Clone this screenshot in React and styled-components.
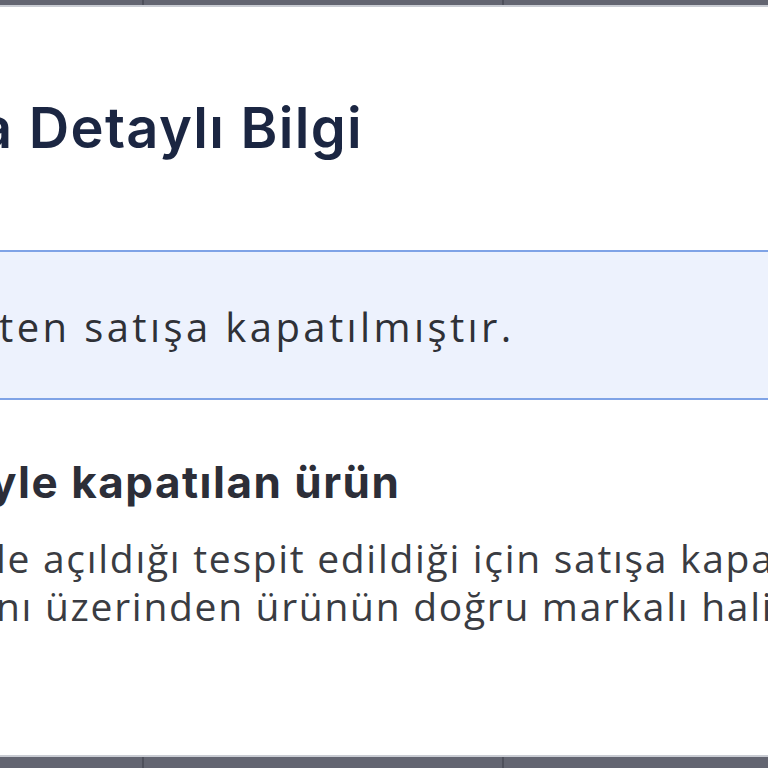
import React from "react";
import styled, { createGlobalStyle } from "styled-components";

const GlobalStyle = createGlobalStyle`
  html, body {
    margin: 0;
    padding: 0;
    background: #ffffff;
  }
  body {
    font-family: "Open Sans", "Noto Sans", Arial, sans-serif;
  }
`;

const Page = styled.div`
  width: 768px;
  height: 768px;
  display: flex;
  flex-direction: column;
  overflow: hidden;
  background: #ffffff;
`;

const Bar = styled.div`
  flex: 0 0 auto;
  height: ${(props) => props.$height}px;
  background: #636571;
  display: grid;
  grid-template-columns: 142px 2px 358px 2px 1fr;
  border-${(props) => (props.$top ? "bottom" : "top")}: 2px solid #c9ccd3;
`;

const BarDivider = styled.div`
  grid-column: ${(props) => props.$col};
  background: #4e505b;
`;

const Modal = styled.div`
  flex: 1 1 auto;
  display: flex;
  flex-direction: column;
  overflow: hidden;
`;

const Title = styled.h2`
  margin: 93px 0 0 -20px;
  font-family: Inter, "Open Sans", sans-serif;
  font-weight: 600;
  font-size: 56px;
  line-height: 56px;
  letter-spacing: 1.3px;
  color: #1b2642;
  white-space: nowrap;
`;

const Alert = styled.div`
  margin-top: 94px;
  height: 150px;
  box-sizing: border-box;
  padding-top: 4px;
  background: #edf2fd;
  border-top: 2px solid #7fa3e6;
  border-bottom: 2px solid #7fa3e6;
  display: flex;
  align-items: center;
`;

const AlertText = styled.p`
  margin: 0 0 0 -1px;
  font-family: "Open Sans", "Noto Sans", sans-serif;
  font-weight: 400;
  font-size: 40px;
  line-height: 40px;
  letter-spacing: 3.4px;
  color: #2f3137;
  white-space: nowrap;
`;

const Section = styled.div`
  padding-top: 60px;
  display: flex;
  flex-direction: column;
  gap: 30px;
`;

const SectionTitle = styled.h3`
  margin: 0 0 0 -10px;
  font-family: Inter, "Open Sans", sans-serif;
  font-weight: 700;
  font-size: 44px;
  line-height: 44px;
  letter-spacing: 1.5px;
  color: #2c2e38;
  white-space: nowrap;
`;

const SectionBody = styled.p`
  margin: 0 0 0 -4px;
  font-family: "Open Sans", "Noto Sans", sans-serif;
  font-weight: 400;
  font-size: 39px;
  line-height: 48px;
  letter-spacing: 1.7px;
  color: #3a3c42;
  white-space: nowrap;
`;

export default function App() {
  return (
    <>
      <GlobalStyle />
      <Page>
        <Bar $height={5} $top>
          <BarDivider $col={2} />
          <BarDivider $col={4} />
        </Bar>
        <Modal>
          <Title>a Detaylı Bilgi</Title>
          <Alert>
            <AlertText>ten satışa kapatılmıştır.</AlertText>
          </Alert>
          <Section>
            <SectionTitle>yle kapatılan ürün</SectionTitle>
            <SectionBody>
              le açıldığı tespit edildiği için satışa kapatılmıştır.
              <br />
              nı üzerinden ürünün doğru markalı halini satışa açabilirsiniz.
            </SectionBody>
          </Section>
        </Modal>
        <Bar $height={11}>
          <BarDivider $col={2} />
          <BarDivider $col={4} />
        </Bar>
      </Page>
    </>
  );
}
